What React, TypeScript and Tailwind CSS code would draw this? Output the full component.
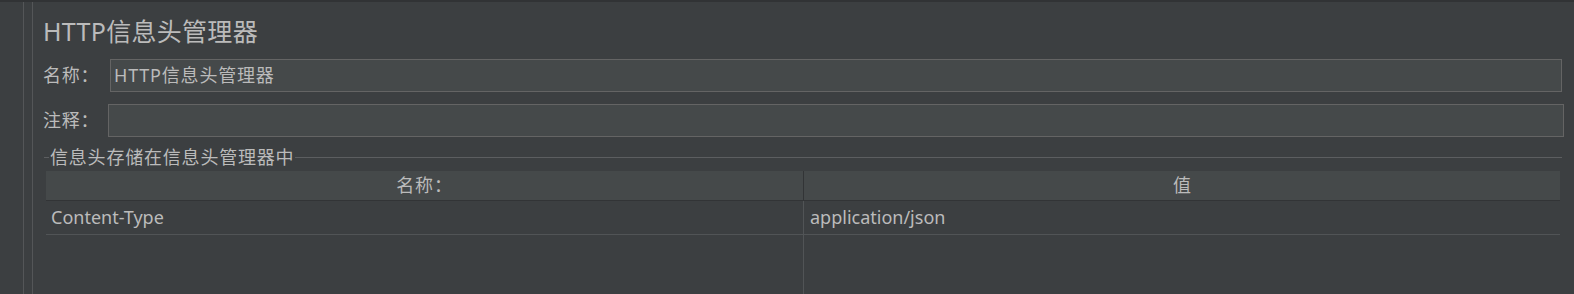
import React from 'react'

const font = "font-['Noto_Sans','Noto_Sans_CJK_SC',sans-serif]"

const App: React.FC = () => {
  const rows = [{ name: 'Content-Type', value: 'application/json' }]

  return (
    <div className={`w-[1574px] h-[294px] overflow-hidden bg-[#3c3f41] border-t-2 border-[#313335] flex text-[#bbbbbb] ${font}`}>
      {/* left gutter */}
      <div className="w-[24px] shrink-0 border-r border-[#545658]" />
      <div className="w-[9px] shrink-0 border-r border-[#545658]" />

      {/* content */}
      <div className="flex-1 flex flex-col pl-[10px] pr-[12px]">
        <h1 className="mt-[14px] h-[30px] leading-[30px] text-[25px] font-normal tracking-[0.3px]">HTTP信息头管理器</h1>

        {/* name */}
        <div className="mt-[13px] flex items-center h-[33px]">
          <span className="w-[67px] shrink-0 text-[18px] tracking-[0.8px]">名称：</span>
          <div className="flex-1 h-full bg-[#45494a] border border-[#646464] px-[3px] flex items-center text-[18px] tracking-[0.8px]">
            HTTP信息头管理器
          </div>
        </div>

        {/* comment */}
        <div className="mt-[12px] flex items-center h-[33px] mr-[-2px]">
          <span className="w-[65px] shrink-0 text-[18px] tracking-[0.8px]">注释：</span>
          <div className="flex-1 h-full bg-[#45494a] border border-[#646464]" />
        </div>

        {/* group title */}
        <div className="mt-[10px] h-[20px] flex items-center ml-[1px]">
          <div className="w-[5px] h-px bg-[#5c5e60]" />
          <span className="px-[1px] text-[18px] leading-[20px] tracking-[0.8px]">信息头存储在信息头管理器中</span>
          <div className="flex-1 h-px bg-[#5c5e60]" />
        </div>

        {/* table */}
        <div className="mt-[4px] ml-[3px] mr-[2px] flex-1 grid grid-cols-[758px_1fr] grid-rows-[30px_34px_1fr] text-[18px]">
          <div className="bg-[#45494a] border-b border-r border-[#323436] flex items-center justify-center tracking-[0.8px]">名称：</div>
          <div className="bg-[#45494a] border-b border-[#323436] flex items-center justify-center">值</div>
          {rows.map((r) => (
            <React.Fragment key={r.name}>
              <div className="border-b border-r border-[#515456] flex items-center pl-[5px]">{r.name}</div>
              <div className="border-b border-[#515456] flex items-center pl-[6px]">{r.value}</div>
            </React.Fragment>
          ))}
          <div className="border-r border-[#515456]" />
          <div />
        </div>
      </div>
    </div>
  )
}

export default App
